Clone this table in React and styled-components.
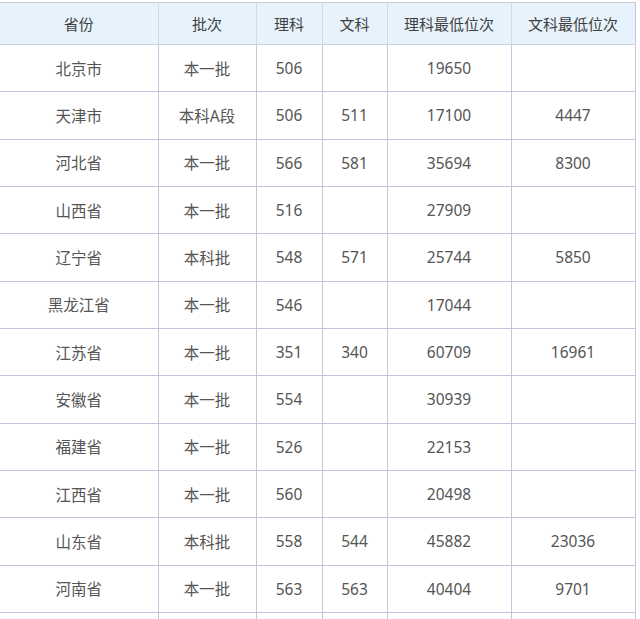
import React from "react";
import styled, { createGlobalStyle } from "styled-components";

const GlobalStyle = createGlobalStyle`
  body {
    margin: 0;
    background: #ffffff;
    font-family: "Noto Sans", "Noto Sans CJK SC", sans-serif;
  }
`;

const rows = [
  ["北京市", "本一批", "506", "", "19650", ""],
  ["天津市", "本科A段", "506", "511", "17100", "4447"],
  ["河北省", "本一批", "566", "581", "35694", "8300"],
  ["山西省", "本一批", "516", "", "27909", ""],
  ["辽宁省", "本科批", "548", "571", "25744", "5850"],
  ["黑龙江省", "本一批", "546", "", "17044", ""],
  ["江苏省", "本一批", "351", "340", "60709", "16961"],
  ["安徽省", "本一批", "554", "", "30939", ""],
  ["福建省", "本一批", "526", "", "22153", ""],
  ["江西省", "本一批", "560", "", "20498", ""],
  ["山东省", "本科批", "558", "544", "45882", "23036"],
  ["河南省", "本一批", "563", "563", "40404", "9701"],
  ["", "", "", "", "", ""],
];

const headers = ["省份", "批次", "理科", "文科", "理科最低位次", "文科最低位次"];
const widths = [158, 98, 66, 65, 124, 124];

function App() {
  return (
    <Page>
      <GlobalStyle />
      <Table>
        <colgroup>
          {widths.map((w, i) => (
            <col key={i} style={{ width: w }} />
          ))}
        </colgroup>
        <thead>
          <tr>
            {headers.map((h, i) => (
              <HeadCell key={i} $first={i === 0}>{h}</HeadCell>
            ))}
          </tr>
        </thead>
        <tbody>
          {rows.map((r, ri) => (
            <tr key={ri}>
              {r.map((c, ci) => (
                <Cell key={ci} $first={ci === 0}>{c}</Cell>
              ))}
            </tr>
          ))}
        </tbody>
      </Table>
    </Page>
  );
}

const Page = styled.div`
  width: 640px;
  height: 619px;
  overflow: hidden;
  padding-top: 2px;
  box-sizing: border-box;
`;

const Table = styled.table`
  width: 635px;
  table-layout: fixed;
  border-collapse: collapse;
  border-top: 1px solid #c9ccd0;
  border-right: 1px solid #c8c2de;
`;

const HeadCell = styled.th`
  height: 41px;
  padding: 0;
  background: #e7f3fc;
  color: #3f3f3f;
  font-size: 15px;
  font-weight: normal;
  text-align: center;
  border-bottom: 1px solid #cdd3d8;
  border-left: ${(p) => (p.$first ? "none" : "1px solid #d3d9df")};
`;

const Cell = styled.td`
  height: 46.33px;
  padding: 0;
  color: #555555;
  font-size: 15.5px;
  text-align: center;
  border-bottom: 1px solid #c8c2de;
  border-left: ${(p) => (p.$first ? "none" : "1px solid #c8c2de")};
`;

export default App;
